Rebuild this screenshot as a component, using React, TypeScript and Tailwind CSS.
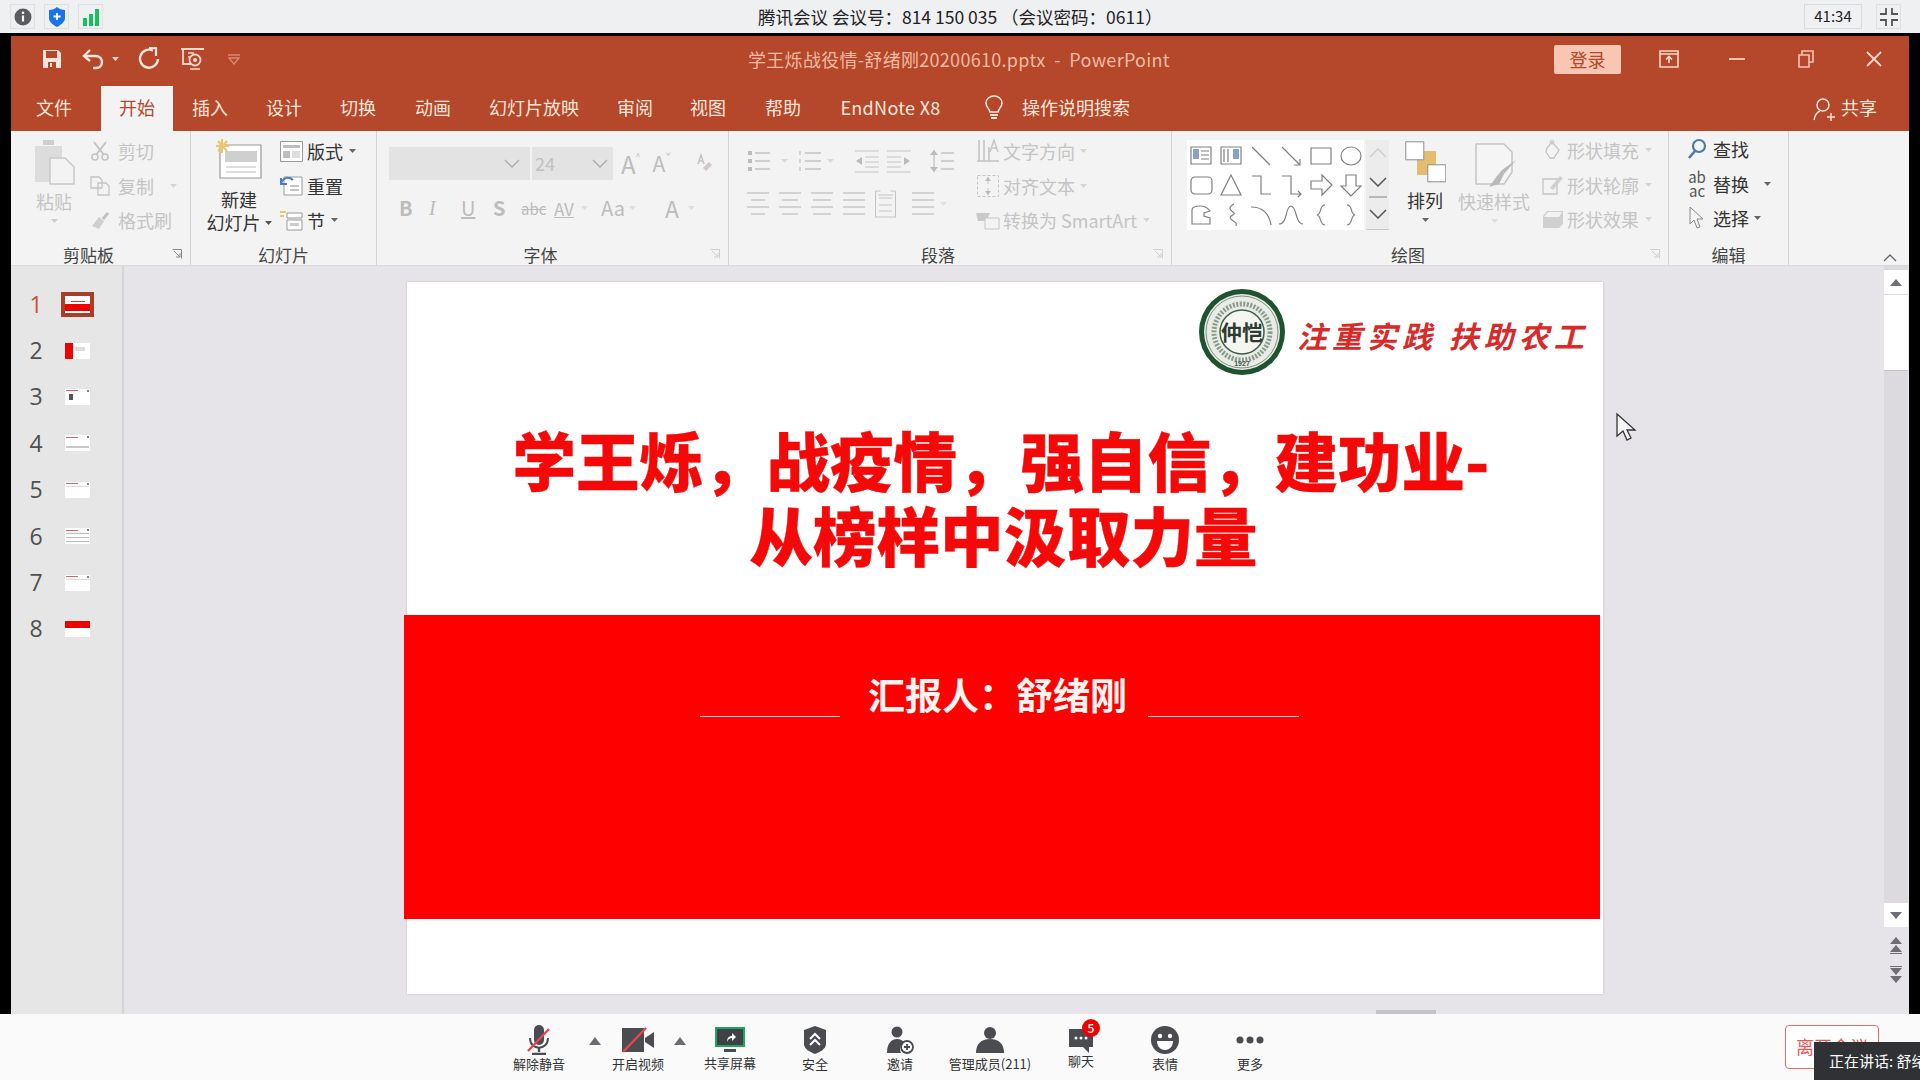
import React from "react";

const G = "#c4c4c4";

function Svg({ w, h, children, className = "" }: { w: number; h: number; children: React.ReactNode; className?: string }) {
  return (
    <svg width={w} height={h} viewBox={`0 0 ${w} ${h}`} fill="none" className={`shrink-0 ${className}`}>
      {children}
    </svg>
  );
}

function Caret({ color = "#777" }: { color?: string }) {
  return (
    <svg width="7" height="4" viewBox="0 0 7 4" className="shrink-0">
      <path d="M0 0h7L3.5 4z" fill={color} />
    </svg>
  );
}

function Lines({ w = 22, n = 4, color = G, insets = [] as number[] }: { w?: number; n?: number; color?: string; insets?: number[] }) {
  return (
    <Svg w={w} h={n * 7}>
      {Array.from({ length: n }).map((_, i) => {
        const ins = insets[i] || 0;
        return <path key={i} d={`M${ins} ${3 + i * 7}H${w - ins}`} stroke={color} strokeWidth="1.4" />;
      })}
    </Svg>
  );
}

function Tab({ label, active, cls }: { label: string; active?: boolean; cls: string }) {
  return (
    <div
      className={`flex h-[45px] items-center justify-center pb-[2px] text-[18px] ${cls} ${
        active ? "bg-[#f3f3f3] text-[#b5472a]" : "text-[#fbe6da]"
      }`}
    >
      {label}
    </div>
  );
}

function TitleBar() {
  return (
    <div className="relative flex h-[50px] items-center pb-[4px]">
      <div className="ml-[31px] flex items-center">
        <Svg w={20} h={20}>
          <path d="M1 1h15l3 3v15H1z" fill="#f7e4dc" />
          <path d="M4 2h11v7H4z" fill="#b5472a" />
          <path d="M6 13h8v6H6z" fill="#b5472a" />
          <path d="M8 14h2v4H8z" fill="#f7e4dc" />
        </Svg>
        <Svg w={24} h={22} className="ml-[20px]">
          <path d="M8 2 2 8l6 5" stroke="#f7e4dc" strokeWidth="2.4" />
          <path d="M3 8h10c5 0 7 3 7 6s-2 6-6 6h-3" stroke="#f7e4dc" strokeWidth="2.4" />
        </Svg>
        <div className="ml-[6px]">
          <Caret color="#f4d8cc" />
        </div>
        <Svg w={22} h={24} className="ml-[19px]">
          <path d="M15 3.6A9 9 0 1 0 20 12" stroke="#f7e4dc" strokeWidth="2.4" />
          <path d="M11 1h7v8" stroke="#f7e4dc" strokeWidth="2.2" />
        </Svg>
        <Svg w={24} h={24} className="ml-[20px]">
          <path d="M1 2h23M3 2v15h8" stroke="#f3d7ca" strokeWidth="1.8" />
          <circle cx="15" cy="13" r="5.5" stroke="#f3d7ca" strokeWidth="1.8" />
          <circle cx="15" cy="13" r="2" fill="#f3d7ca" />
          <path d="M8 6h6M8 10h3M10 22h10" stroke="#f3d7ca" strokeWidth="1.6" />
        </Svg>
        <Svg w={14} h={12} className="ml-[23px]">
          <path d="M1 2h12M2 5h10l-5 6z" stroke="#d98a6d" strokeWidth="1.4" />
        </Svg>
      </div>
      <div className="ml-[507px] whitespace-pre text-[18px] leading-none tracking-[0.3px] text-[#f2b9a2]">学王烁战役情-舒绪刚20200610.pptx  -  PowerPoint</div>
      <div className="ml-[384px] flex h-[29px] w-[67px] items-center justify-center rounded-[2px] bg-[#f8c6b2] text-[18px] text-[#b5472a]">登录</div>
      <Svg w={22} h={20} className="ml-[37px]">
        <path d="M2 2h18v16H2zM2 5h18" stroke="#f7d9cc" strokeWidth="1.6" />
        <path d="M11 14V8M8 10.500l3-3 3 3" stroke="#f7d9cc" strokeWidth="1.6" />
      </Svg>
      <div className="ml-[49px] h-[2px] w-[16px] bg-[#f3c5b2]" />
      <Svg w={16} h={18} className="ml-[53px]">
        <path d="M1 5h10v12H1zM4 5V1h11v11h-4" stroke="#f3c5b2" strokeWidth="1.6" />
      </Svg>
      <Svg w={16} h={16} className="ml-[52px]">
        <path d="M1 1l14 14M15 1 1 15" stroke="#f7d9cc" strokeWidth="1.8" />
      </Svg>
    </div>
  );
}

function TabsRow() {
  return (
    <div className="flex h-[45px] items-center pl-[7px]">
      <Tab label="文件" cls="w-[72px]" />
      <Tab label="开始" active cls="ml-[11px] w-[72px]" />
      <Tab label="插入" cls="ml-[1px] w-[72px]" />
      <Tab label="设计" cls="ml-[2px] w-[72px]" />
      <Tab label="切换" cls="ml-[2px] w-[72px]" />
      <Tab label="动画" cls="ml-[3px] w-[72px]" />
      <Tab label="幻灯片放映" cls="ml-[2px] w-[126px]" />
      <Tab label="审阅" cls="ml-[2px] w-[72px]" />
      <Tab label="视图" cls="ml-[1px] w-[72px]" />
      <Tab label="帮助" cls="ml-[3px] w-[72px]" />
      <Tab label="EndNote X8" cls="ml-[3px] w-[137px] tracking-[0.3px]" />
      <Svg w={20} h={26} className="ml-[25px] mb-[2px]">
        <path d="M6 17C5 13 2 12 2 8a8 7 0 0 1 16 0c0 4-3 5-4 9z" stroke="#fbe6da" strokeWidth="1.5" />
        <path d="M6 20h8M7 23h6" stroke="#fbe6da" strokeWidth="1.8" />
      </Svg>
      <div className="ml-[18px] pb-[2px] text-[18px] text-[#fbe6da]">操作说明搜索</div>
      <Svg w={22} h={24} className="ml-[683px] mt-[1px]">
        <circle cx="10" cy="8" r="6" stroke="#fbe6da" strokeWidth="1.5" />
        <path d="M1 23c1-5 3-8 6-9M14 20h8M18 16v8" stroke="#fbe6da" strokeWidth="1.5" />
      </Svg>
      <div className="ml-[6px] pb-[2px] text-[18px] text-[#fbe6da]">共享</div>
    </div>
  );
}

function Group({ w, label, children, launcher, lightLauncher }: { w: string; label: string; children: React.ReactNode; launcher?: boolean; lightLauncher?: boolean }) {
  return (
    <div className={`flex h-[134px] flex-col border-r border-[#d4d4d4] ${w}`}>
      <div className="flex h-[112px] items-start">{children}</div>
      <div className="flex h-[22px] items-center text-[17px] leading-none text-[#444]">
        <div className="flex-1 text-center">{label}</div>
        {launcher && (
          <Svg w={10} h={10} className="ml-[6px] mr-[8px]">
            <path d="M.5.500h9v9M2 2l6 6M8 4v4H4" stroke={lightLauncher ? "#cfcfcf" : "#8a8a8a"} strokeWidth="1" />
          </Svg>
        )}
      </div>
    </div>
  );
}

function Small({ icon, label, color = G, caret, gap = "ml-[7px]" }: { icon: React.ReactNode; label: string; color?: string; caret?: string; gap?: string }) {
  return (
    <div className="flex h-[34.500px] items-center">
      <div className="flex w-[22px] shrink-0 justify-center">{icon}</div>
      <div className={`${gap} whitespace-nowrap text-[18px] leading-none`} style={{ color }}>
        {label}
      </div>
      {caret && (
        <div className={caret}>
          <Caret color={color === G ? "#d4d4d4" : "#666"} />
        </div>
      )}
    </div>
  );
}

function Clipboard() {
  return (
    <Group w="w-[180px]" label="剪贴板" launcher>
      <div className="ml-[21px] mt-[8px] flex w-[44px] flex-col items-center">
        <Svg w={42} h={46}>
          <path d="M2 7h27v36H2z" fill="#dcdcdc" />
          <path d="M10 6h11V1H10z" fill="#cfcfcf" />
          <path d="M17 19h15l9 9v17H17z" fill="#f3f3f3" stroke="#c9c9c9" strokeWidth="1.5" />
        </Svg>
        <div className="mt-[7px] text-[18px] leading-none text-[#c4c4c4]">粘贴</div>
        <div className="mt-[9px]">
          <Caret color="#ccc" />
        </div>
      </div>
      <div className="ml-[13px] mt-[3px] flex flex-col">
        <Small
          label="剪切"
          icon={
            <Svg w={19} h={20}>
              <path d="M3 1l10 13M15 1 5 14" stroke={G} strokeWidth="2" />
              <circle cx="4" cy="16" r="3" stroke={G} strokeWidth="1.6" />
              <circle cx="14" cy="16" r="3" stroke={G} strokeWidth="1.6" />
            </Svg>
          }
        />
        <Small
          label="复制"
          caret="ml-[16px]"
          icon={
            <Svg w={20} h={20}>
              <path d="M1 1h8l3 3v8H1zM8 7h8l3 3v9H8z" fill="#f3f3f3" stroke={G} strokeWidth="1.3" />
            </Svg>
          }
        />
        <Small
          label="格式刷"
          icon={
            <Svg w={20} h={20}>
              <path d="M2 16 9 7l5 4-5 8z" fill="#cfcfcf" />
              <path d="m12 8 5-6 2 2-5 6z" fill="#bdbdbd" />
            </Svg>
          }
        />
      </div>
    </Group>
  );
}

function Slides() {
  return (
    <Group w="w-[186px]" label="幻灯片">
      <div className="ml-[15px] mt-[8px] flex w-[66px] flex-col items-center">
        <Svg w={46} h={40}>
          <path d="M4 6h41v33H4z" fill="#fff" stroke="#9a9a9a" strokeWidth="1.2" />
          <path d="M9 12h32v11H9z" fill="#cfcfcf" />
          <path d="M10 28h30M10 33h30" stroke="#bbb" />
          <path d="M6 0v14M0 7h13M2 2l9 10M11 2 2 12" stroke="#ecc46b" strokeWidth="2" />
        </Svg>
        <div className="mt-[9px] whitespace-nowrap text-[18px] leading-[23px] text-[#333]">新建</div>
        <div className="flex items-center whitespace-nowrap text-[18px] leading-[23px] text-[#333]">
          幻灯片<span className="ml-[4px]"><Caret color="#555" /></span>
        </div>
      </div>
      <div className="ml-[8px] mt-[3px] flex flex-col">
        <Small
          label="版式"
          color="#333"
          gap="ml-[5px]"
          caret="ml-[6px]"
          icon={
            <Svg w={23} h={21}>
              <path d="M.5.500h22v20H.5z" fill="#fff" stroke="#9a9a9a" />
              <path d="M3 4h17v3H3zM3 10h7v7H3z" fill="#bdbdbd" />
              <path d="M12 10h8v7h-8z" fill="#ddd" />
            </Svg>
          }
        />
        <Small
          label="重置"
          color="#333"
          gap="ml-[5px]"
          icon={
            <Svg w={23} h={21}>
              <path d="M4 2h18v18H4z" fill="#fff" stroke="#9a9a9a" />
              <path d="M10 11h9M10 15h9" stroke="#888" />
              <path d="M1 8c2-5 7-7 12-3" stroke="#4b7bc0" strokeWidth="2" />
              <path d="M1 3v6h6" stroke="#4b7bc0" strokeWidth="2" />
            </Svg>
          }
        />
        <Small
          label="节"
          color="#333"
          gap="ml-[5px]"
          caret="ml-[6px]"
          icon={
            <Svg w={23} h={21}>
              <path d="M0 2h6M0 6h4" stroke="#ecc46b" strokeWidth="2" />
              <path d="M7 3h15v5H7z" fill="#fff" stroke="#999" />
              <path d="M7 10h15v10H7z" fill="#fff" stroke="#999" />
              <path d="M10 13h9v3h-9z" fill="#ccc" />
            </Svg>
          }
        />
      </div>
    </Group>
  );
}

function Font() {
  const t = "text-[#bcbcbc] leading-none";
  return (
    <Group w="w-[352px]" label="字体" launcher lightLauncher>
      <div className="ml-[12px] mt-[16px] flex flex-col">
        <div className="flex items-center">
          <div className="flex h-[33px] w-[141px] items-center justify-end bg-[#e3e3e3] pr-[10px]">
            <Svg w={16} h={9}>
              <path d="m1 1 7 7 7-7" stroke="#b0b0b0" strokeWidth="1.5" />
            </Svg>
          </div>
          <div className="ml-[2px] flex h-[33px] w-[81px] items-center justify-between bg-[#e3e3e3] pl-[3px] pr-[5px] text-[18px] text-[#c0c0c0]">
            24
            <Svg w={16} h={9}>
              <path d="m1 1 7 7 7-7" stroke="#b0b0b0" strokeWidth="1.5" />
            </Svg>
          </div>
          <span className={`ml-[8px] text-[24px] ${t}`}>A</span>
          <span className="mb-[14px] text-[9px] leading-none text-[#bcbcbc]">^</span>
          <span className={`ml-[12px] text-[21px] ${t}`}>A</span>
          <span className="mb-[14px] text-[9px] leading-none text-[#bcbcbc]">ˇ</span>
          <Svg w={20} h={24} className="ml-[22px]">
            <path d="M5 12 8 3l3 9M6 9h4" stroke={G} strokeWidth="1.5" />
            <path d="m10 16 6-6 3 3-6 6z" fill="#d2c8c8" />
          </Svg>
        </div>
        <div className="ml-[10px] mt-[13px] flex h-[30px] items-center">
          <span className={`w-[30px] text-[20px] font-bold ${t}`}>B</span>
          <span className={`w-[32px] text-[20px] italic ${t}`} style={{ fontFamily: "Liberation Serif" }}>I</span>
          <span className={`w-[32px] text-[20px] underline ${t}`}>U</span>
          <span className={`w-[28px] text-[20px] font-bold ${t}`}>S</span>
          <span className={`w-[33px] text-[15px] line-through ${t}`}>abc</span>
          <span className={`w-[27px] text-[17px] underline ${t}`}>AV</span>
          <Caret color="#ddd" />
          <span className={`ml-[13px] w-[28px] text-[20px] ${t}`}>Aa</span>
          <Caret color="#ddd" />
          <span className={`ml-[29px] text-[23px] ${t}`}>A</span>
          <span className="ml-[9px]">
            <Caret color="#ddd" />
          </span>
        </div>
      </div>
    </Group>
  );
}

function Para() {
  return (
    <Group w="w-[443px]" label="段落" launcher lightLauncher>
      <div className="ml-[18px] mt-[15px] flex w-[210px] flex-col">
        <div className="flex h-[30px] items-center">
          <Svg w={23} h={24}>
            <path d="M8 4h15M8 12h15M8 20h15" stroke={G} strokeWidth="1.3" />
            <path d="M1 2h4v4H1zM1 10h4v4H1zM1 18h4v4H1z" fill="#bbb" />
          </Svg>
          <span className="ml-[11px]"><Caret color="#d8d8d8" /></span>
          <Svg w={24} h={24} className="ml-[9px]">
            <path d="M8 4h16M8 12h16M8 20h16M3 2v4M3 10v4M3 18v4" stroke={G} strokeWidth="1.3" />
          </Svg>
          <span className="ml-[6px]"><Caret color="#d8d8d8" /></span>
          <Svg w={24} h={24} className="ml-[21px]">
            <path d="M0 2h24M10 8h14M10 13h14M10 18h14M0 23h24" stroke={G} />
            <path d="M1 12 7 8v8z" fill="#bbb" />
          </Svg>
          <Svg w={24} h={24} className="ml-[8px]">
            <path d="M0 2h24M0 8h14M0 13h14M0 18h14M0 23h24" stroke={G} />
            <path d="m23 12-6-4v8z" fill="#bbb" />
          </Svg>
          <Svg w={26} h={26} className="ml-[18px]">
            <path d="M12 5h13M12 13h13M12 21h13M5 2v22" stroke={G} strokeWidth="1.3" />
            <path d="M1 7l4-5 4 5zM1 19l4 5 4-5z" fill="#bbb" />
          </Svg>
        </div>
        <div className="mt-[13px] flex h-[30px] items-center">
          <Lines insets={[0, 4, 0, 4]} />
          <span className="ml-[10px]"><Lines insets={[0, 3, 0, 3]} /></span>
          <span className="ml-[10px]"><Lines insets={[0, 2, 0, 2]} /></span>
          <span className="ml-[10px]"><Lines /></span>
          <Svg w={21} h={28} className="ml-[10px]">
            <path d="M.5 1v26h20V1M.5 1h5M20.500 1h-5M4 8h13M4 15h13M4 21h13M3 5h15" stroke={G} strokeWidth="1.1" />
          </Svg>
          <span className="ml-[16px]"><Lines /></span>
          <span className="ml-[6px]"><Caret color="#e0e0e0" /></span>
        </div>
      </div>
      <div className="ml-[20px] mt-[3px] flex flex-col">
        <Small
          label="文字方向"
          caret="ml-[5px]"
          gap="ml-[4px]"
          icon={
            <Svg w={22} h={24}>
              <path d="M2 1v21M7 1v21M12 8v14" stroke={G} strokeWidth="1.6" />
              <path d="m13 13 4-12 4 12M14.500 9h5" stroke={G} strokeWidth="1.4" />
              <path d="M0 22h22" stroke={G} strokeWidth="1.6" />
            </Svg>
          }
        />
        <Small
          label="对齐文本"
          caret="ml-[5px]"
          gap="ml-[4px]"
          icon={
            <Svg w={22} h={22}>
              <path d="M.5.500h21v21H.5z" stroke={G} strokeDasharray="3 2" />
              <path d="M11 2v7M11 13v7" stroke={G} />
              <path d="M8 6l3-4 3 4zM8 16l3 4 3-4z" fill="#bbb" />
            </Svg>
          }
        />
        <Small
          label="转换为 SmartArt"
          caret="ml-[6px]"
          gap="ml-[4px]"
          icon={
            <Svg w={24} h={20}>
              <path d="M0 3h14l-4 8H2z" fill="#c9c9c9" />
              <path d="M9 8h14v11H9z" fill="#f3f3f3" stroke={G} />
            </Svg>
          }
        />
      </div>
    </Group>
  );
}

function Shape({ children }: { children: React.ReactNode }) {
  return (
    <Svg w={30} h={30}>
      <g stroke="#808080" strokeWidth="1.2">{children}</g>
    </Svg>
  );
}

function GalleryShapes() {
  return (
    <div className="grid grid-cols-[repeat(6,30px)] grid-rows-[repeat(3,29.500px)]">
      <Shape><path d="M5 6h20v17H5z" /><path d="M15 10h8M15 14h8M15 18h8" /><path d="M7 8h6v10H7z" fill="#8aa1c4" stroke="none" /></Shape>
      <Shape><path d="M5 6h20v17H5z" /><path d="M8 8v13M12 8v13" /><path d="M17 8h6v10h-6z" fill="#8aa1c4" stroke="none" /></Shape>
      <Shape><path d="m6 6 18 18" /></Shape>
      <Shape><path d="m6 6 18 18M24 18v6h-6" /></Shape>
      <Shape><path d="M5 7h20v16H5z" /></Shape>
      <Shape><ellipse cx="15" cy="15" rx="10" ry="9" /></Shape>
      <Shape><rect x="5" y="7" width="21" height="17" rx="4" /></Shape>
      <Shape><path d="M15 5 5 25h20z" /></Shape>
      <Shape><path d="M6 6h9v18h10" /></Shape>
      <Shape><path d="M6 6h9v18h10M22 21l3 3-3 3" /></Shape>
      <Shape><path d="M5 11h11V5l10 10-10 10v-6H5z" /></Shape>
      <Shape><path d="M10 5h10v11h5L15 26 5 16h5z" /></Shape>
      <Shape><path d="M6 24V10c0-3 3-4 8-4 5 0 8 2 10 5l-6 2v3l6 2v6z" /></Shape>
      <Shape><path d="M18 4c-8 4-2 7 0 9s-8 3-2 7 4 4 4 6" /></Shape>
      <Shape><path d="M5 7c12 0 18 6 20 18" /></Shape>
      <Shape><path d="M3 24C12 24 9 6 15 6s4 18 12 18" /></Shape>
      <Shape><path d="M19 5c-6 0-3 9-8 10 5 1 2 10 8 10" /></Shape>
      <Shape><path d="M11 5c6 0 3 9 8 10-5 1-2 10-8 10" /></Shape>
    </div>
  );
}

function Drawing() {
  return (
    <Group w="w-[497px]" label="绘图" launcher lightLauncher>
      <div className="ml-[15px] mt-[9px] flex">
        <div className="flex h-[90px] w-[177px] items-center justify-center bg-white">
          <GalleryShapes />
        </div>
        <div className="ml-[2px] flex h-[90px] w-[23px] flex-col items-center border-b border-[#c8c8c8] bg-[#ececec]">
          <div className="flex h-[27px] items-center">
            <Svg w={18} h={10}><path d="m1 9 8-8 8 8" stroke="#cfcfcf" strokeWidth="1.5" /></Svg>
          </div>
          <div className="flex h-[30px] items-center">
            <Svg w={18} h={10}><path d="m1 1 8 8 8-8" stroke="#555" strokeWidth="1.5" /></Svg>
          </div>
          <div className="flex h-[33px] flex-col items-center justify-center gap-[4px] border-t-2 border-[#b8b8b8] pt-[1px]">
            <Svg w={18} h={10}><path d="m1 1 8 8 8-8" stroke="#555" strokeWidth="1.5" /></Svg>
          </div>
        </div>
      </div>
      <div className="ml-[14px] mt-[10px] flex w-[44px] flex-col items-center">
        <Svg w={41} h={42}>
          <path d="M12 10h19v24H12z" fill="#e5bd6f" />
          <path d="M.8.800h18v18H.8z" fill="#fff" stroke="#8c8c8c" />
          <path d="M22.800 23.800h18v17H22.800z" fill="#fff" stroke="#8c8c8c" />
        </Svg>
        <div className="mt-[8px] text-[18px] leading-none text-[#333]">排列</div>
        <div className="mt-[9px]"><Caret color="#666" /></div>
      </div>
      <div className="ml-[11px] mt-[12px] flex w-[72px] flex-col items-center">
        <Svg w={48} h={44}>
          <path d="M6 1h28l8 8v20l-8 12H6z" fill="#f5f5f5" stroke={G} strokeWidth="1.5" strokeLinejoin="round" />
          <path d="m46 17-12 14-5 10-10 3 8-11 5-6z" fill="#b9b9b9" />
        </Svg>
        <div className="mt-[5px] whitespace-nowrap text-[18px] leading-none text-[#c4c4c4]">快速样式</div>
        <div className="mt-[9px]"><Caret color="#ddd" /></div>
      </div>
      <div className="ml-[12px] mt-[2px] flex flex-col">
        <Small
          label="形状填充"
          caret="ml-[6px]"
          gap="ml-[3px]"
          icon={
            <Svg w={20} h={22}>
              <path d="M4 9 9 3l7 8-5 8H7l-4-6z" fill="#f3f3f3" stroke={G} strokeWidth="1.3" />
              <circle cx="9" cy="3" r="2" stroke={G} />
            </Svg>
          }
        />
        <Small
          label="形状轮廓"
          caret="ml-[6px]"
          gap="ml-[3px]"
          icon={
            <Svg w={22} h={20}>
              <path d="M1 4h14v15H1z" stroke={G} strokeWidth="1.3" />
              <path d="m8 13 10-12 3 2-10 12z" fill="#cfcfcf" />
            </Svg>
          }
        />
        <Small
          label="形状效果"
          caret="ml-[6px]"
          gap="ml-[3px]"
          icon={
            <Svg w={22} h={20}>
              <path d="M5 2h16v13l-4 4H1V7z" fill="#d0d0d0" />
              <path d="M6 3h14l-3 5H2z" fill="#f2f2f2" />
            </Svg>
          }
        />
      </div>
    </Group>
  );
}

function Editing() {
  return (
    <Group w="w-[120px]" label="编辑">
      <div className="ml-[17px] mt-[1px] flex flex-col">
        <Small
          label="查找"
          color="#333"
          gap="ml-[5px]"
          icon={
            <Svg w={20} h={22}>
              <circle cx="12" cy="8" r="6" stroke="#4e7aa8" strokeWidth="2.2" />
              <path d="M8 13 2 20" stroke="#4e7aa8" strokeWidth="2.6" />
            </Svg>
          }
        />
        <Small
          label="替换"
          color="#333"
          gap="ml-[5px]"
          caret="ml-[15px]"
          icon={<div className="text-center text-[15px] leading-[14px] text-[#555]">ab<br />ac</div>}
        />
        <Small
          label="选择"
          color="#333"
          gap="ml-[5px]"
          caret="ml-[5px]"
          icon={
            <Svg w={16} h={24}>
              <path d="M1 1v17l4-4 3 8 3-1-3-8h6z" fill="#f6f6f6" stroke="#888" />
            </Svg>
          }
        />
      </div>
    </Group>
  );
}

function Ribbon() {
  return (
    <div className="flex h-[135px] items-start border-b border-[#dadada] bg-[#f3f3f3]">
      <Clipboard />
      <Slides />
      <Font />
      <Para />
      <Drawing />
      <Editing />
      <Svg w={14} h={8} className="ml-[94px] mt-[123px]">
        <path d="m1 7 6-6 6 6" stroke="#666" strokeWidth="1.3" />
      </Svg>
    </div>
  );
}

function Thumb({ n, active, children }: { n: number; active?: boolean; children: React.ReactNode }) {
  return (
    <div className="flex h-[46.400px] items-center">
      <div
        className={`w-[24px] text-center text-[23px] leading-none ${active ? "text-[#c8503c]" : "text-[#505050]"}`}
        style={{ fontFamily: "Open Sans" }}
      >
        {n}
      </div>
      {active ? (
        <div className="ml-[13px] h-[25px] w-[33px] border-[4px] border-[#a63f2a] bg-white">{children}</div>
      ) : (
        <div className="ml-[17px] h-[16px] w-[25px] overflow-hidden bg-white">{children}</div>
      )}
    </div>
  );
}

function MiniHead() {
  return (
    <div className="flex items-center justify-between px-[1px] pt-[1px]">
      <div className="h-[1px] w-[12px] bg-[#d8646a]" />
      <div className="h-[2px] w-[2px] bg-[#888]" />
    </div>
  );
}

function Thumbs() {
  return (
    <div className="w-[113px] shrink-0 border-r-2 border-[#d6d6d6] bg-[#e6e6e6] pl-[13px] pt-[15px]">
      <Thumb n={1} active>
        <div className="flex h-full flex-col justify-end">
          <div className="mx-auto mb-[2px] h-[1px] w-[14px] bg-[#e03030]" />
          <div className="h-[7px] bg-[#f00000]" />
          <div className="h-[2px]" />
        </div>
      </Thumb>
      <Thumb n={2}>
        <div className="flex h-full">
          <div className="w-[8px] bg-[#f00000]" />
          <div className="ml-[2px] mt-[4px] h-[4px] w-[10px] bg-[#ddd]" />
        </div>
      </Thumb>
      <Thumb n={3}>
        <MiniHead />
        <div className="ml-[4px] mt-[2px] h-[6px] w-[4px] bg-[#555]" />
      </Thumb>
      <Thumb n={4}>
        <MiniHead />
        <div className="mx-[1px] mt-[8px] h-[2px] bg-[#c8c8c8]" />
      </Thumb>
      <Thumb n={5}>
        <MiniHead />
        <div className="mx-[1px] mt-[1px] h-[1px] bg-[#ddd]" />
      </Thumb>
      <Thumb n={6}>
        <MiniHead />
        <div className="mx-[1px] mt-[2px] h-[1px] bg-[#bbb]" />
        <div className="mx-[1px] mt-[3px] h-[1px] bg-[#bbb]" />
        <div className="mx-[1px] mt-[3px] h-[1px] bg-[#bbb]" />
      </Thumb>
      <Thumb n={7}>
        <MiniHead />
        <div className="mx-[1px] mt-[1px] h-[1px] bg-[#ddd]" />
      </Thumb>
      <Thumb n={8}>
        <div className="h-[7px] bg-[#f00000]" />
      </Thumb>
    </div>
  );
}

function Logo() {
  return (
    <svg width="88" height="88" viewBox="0 0 88 88" className="shrink-0">
      <circle cx="44" cy="44" r="43" fill="#1f5231" />
      <circle cx="44" cy="44" r="38" fill="#e9ece4" />
      <circle cx="44" cy="44" r="36" fill="none" stroke="#7c9284" strokeWidth="1" />
      <circle cx="44" cy="44" r="28" fill="none" stroke="#8a9a8e" strokeWidth="5" strokeDasharray="2 1.5" />
      <circle cx="44" cy="44" r="22" fill="#f5f5f1" stroke="#3f5e48" strokeWidth="1.5" />
      <text x="44" y="52" textAnchor="middle" fontSize="21" fontWeight="700" fill="#2d3b30" fontFamily="Noto Sans CJK SC">仲恺</text>
      <text x="44" y="78" textAnchor="middle" fontSize="7" fontWeight="700" fill="#465a4b" fontFamily="Liberation Sans">1927</text>
    </svg>
  );
}

function Slide() {
  return (
    <div className="ml-[283px] mt-[16px] h-[712px] w-[1196px] shrink-0 bg-white shadow-[0_0_2px_#bdbdbd]">
      <div className="flex h-[92px] items-start pl-[791px] pt-[6px]">
        <Logo />
        <div
          className="ml-[11px] mt-[29px] whitespace-pre text-[30px] font-bold italic leading-[36px] tracking-[5px] text-[#d92a2a]"
          style={{ fontFamily: "Noto Sans CJK SC, sans-serif" }}
        >
          注重实践 扶助农工
        </div>
      </div>
      <div className="mb-[44px] mt-[47px] text-center text-[63.500px] font-black leading-[75px] text-[#f40808] [-webkit-text-stroke:0.4px_#f40808]">
        <div className="ml-[-8px] whitespace-nowrap">学王烁，战疫情，强自信，建功业-</div>
        <div className="ml-[-3px] whitespace-nowrap">从榜样中汲取力量</div>
      </div>
      <div className="ml-[-3px] flex h-[304px] w-[1196px] items-start bg-[#ff0000] pl-[296px] pt-[57px]">
        <div className="mt-[44px] h-[1px] w-[140px] bg-[#ffd0d0]" />
        <div className="ml-[28px] whitespace-nowrap text-[37px] font-bold leading-[44px] text-[#fff4f0]">汇报人：舒绪刚</div>
        <div className="ml-[21px] mt-[44px] h-[1px] w-[151px] bg-[#ffd0d0]" />
      </div>
    </div>
  );
}

function Arrow({ up }: { up?: boolean }) {
  return (
    <svg width="12" height="7" viewBox="0 0 12 7">
      <path d={up ? "M6 0l6 7H0z" : "M0 0h12L6 7z"} fill="#6e6e76" />
    </svg>
  );
}

function Scrollbar() {
  return (
    <div className="ml-auto mr-[1px] flex w-[24px] shrink-0 flex-col items-center bg-[#dcdadf]">
      <div className="mt-[4px] flex h-[24px] w-full items-center justify-center bg-white">
        <Arrow up />
      </div>
      <div className="mt-[1px] h-[76px] w-full border-b border-[#c4c4c4] bg-white" />
      <div className="flex-1" />
      <div className="flex h-[24px] w-full items-center justify-center bg-white">
        <Arrow />
      </div>
      <div className="flex h-[87px] w-full flex-col items-center bg-[#e6e4e8] pt-[10px]">
        <div className="flex flex-col items-center gap-[1px]">
          <Arrow up />
          <Arrow up />
          <div className="h-[1px] w-[12px] bg-[#6e6e76]" />
        </div>
        <div className="mt-[12px] flex flex-col items-center gap-[1px]">
          <div className="h-[1px] w-[12px] bg-[#6e6e76]" />
          <Arrow />
          <Arrow />
        </div>
      </div>
    </div>
  );
}

function Main() {
  return (
    <div className="relative flex h-[748px] bg-[#e6e4e8]">
      <Thumbs />
      <Slide />
      <Scrollbar />
      <div className="absolute bottom-0 left-[1365px] h-[4px] w-[60px] bg-[#c4c4c6]" />
      <svg width="22" height="30" viewBox="0 0 22 30" className="absolute left-[1604px] top-[146px]">
        <path d="M2 2v22l6-5 4 9 4-2-4-8h8z" fill="#f5f5f5" stroke="#333" strokeWidth="1.3" />
      </svg>
    </div>
  );
}

function ToolItem({ label, cls, children, labelCls = "mt-[1px]" }: { label: string; cls: string; children: React.ReactNode; labelCls?: string }) {
  return (
    <div className={`flex shrink-0 flex-col items-center ${cls}`}>
      <div className="flex h-[30px] items-center justify-center">{children}</div>
      <div className={`whitespace-nowrap text-[13px] leading-[16px] text-[#333] ${labelCls}`}>{label}</div>
    </div>
  );
}

function Tri() {
  return (
    <svg width="12" height="8" viewBox="0 0 12 8" className="mb-[14px] shrink-0">
      <path d="M6 0l6 8H0z" fill="#6b6d72" />
    </svg>
  );
}

function Toolbar() {
  const c = "#4a4c51";
  return (
    <div className="relative flex h-[66px] items-center overflow-hidden bg-[#fafafa] pl-[499px] pt-[2px]">
      <ToolItem label="解除静音" cls="w-[80px]">
        <Svg w={28} h={30}>
          <path d="M14 0a5 5 0 0 1 5 5v10a5 5 0 0 1-10 0V5a5 5 0 0 1 5-5z" fill={c} />
          <path d="M5 13c0 13 18 13 18 0" stroke={c} strokeWidth="2" />
          <path d="M14 22v5M7 29h14" stroke={c} strokeWidth="2.4" />
          <path d="M3 26 24 4" stroke="#e8454c" strokeWidth="2.4" />
        </Svg>
      </ToolItem>
      <div className="ml-[10px]"><Tri /></div>
      <ToolItem label="开启视频" cls="ml-[7px] w-[60px]">
        <Svg w={32} h={26}>
          <path d="M0 1h22v24H0z" fill={c} />
          <path d="m23 11 9-6v16l-9-6z" fill={c} />
          <path d="M1 25 24 1" stroke="#e8454c" strokeWidth="2.4" />
        </Svg>
      </ToolItem>
      <div className="ml-[6px]"><Tri /></div>
      <ToolItem label="共享屏幕" cls="ml-[9px] w-[70px]" labelCls="mb-[1px]">
        <Svg w={30} h={26}>
          <rect x="1" y="1" width="28" height="18" fill="#3e4246" stroke="#1fa463" strokeWidth="2" />
          <path d="M9 22h12v3H9z" fill={c} />
          <path d="M12 15c0-4 2-6 5-6V6l4 4-4 4v-3c-2 0-4 1-5 4z" fill="#fff" />
        </Svg>
      </ToolItem>
      <ToolItem label="安全" cls="ml-[15px] w-[70px]">
        <Svg w={24} h={28}>
          <path d="M12 0l11 4v14c0 5-6 8-11 10C7 26 1 23 1 18V4z" fill={c} />
          <path d="M7 13l5-5 5 5M7 19l5-5 5 5" stroke="#fff" strokeWidth="2" />
        </Svg>
      </ToolItem>
      <ToolItem label="邀请" cls="ml-[15px] w-[70px]">
        <Svg w={28} h={28}>
          <circle cx="11" cy="6" r="5.500" fill={c} />
          <path d="M1 27c0-9 4-14 10-14 3 0 5 1 7 3-4 3-5 7-3 11z" fill={c} />
          <circle cx="21" cy="21" r="6" fill="#fafafa" stroke={c} strokeWidth="1.8" />
          <path d="M21 18v6M18 21h6" stroke={c} strokeWidth="1.8" />
        </Svg>
      </ToolItem>
      <ToolItem label="管理成员(211)" cls="ml-[10px] w-[90px]">
        <Svg w={28} h={28}>
          <circle cx="14" cy="7" r="6" fill={c} />
          <path d="M0 27c0-9 5-14 14-14s14 5 14 14z" fill={c} />
        </Svg>
      </ToolItem>
      <ToolItem label="聊天" cls="ml-[11px] w-[70px]" labelCls="mt-[-2px] mb-[3px]">
        <div className="relative">
          <Svg w={26} h={28}>
            <path d="M1 3h24v18h-4v6l-6-6H1z" fill={c} />
            <circle cx="8" cy="12" r="1.500" fill="#fff" />
            <circle cx="13" cy="12" r="1.500" fill="#fff" />
            <circle cx="18" cy="12" r="1.500" fill="#fff" />
          </Svg>
          <div className="absolute left-[14px] top-[-7px] flex h-[18px] w-[18px] items-center justify-center rounded-full bg-[#f00000] text-[12px] font-medium leading-none text-white">5</div>
        </div>
      </ToolItem>
      <ToolItem label="表情" cls="ml-[14px] w-[70px]">
        <Svg w={28} h={28}>
          <circle cx="14" cy="14" r="14" fill={c} />
          <circle cx="9" cy="10" r="2.200" fill="#fff" />
          <circle cx="19" cy="10" r="2.200" fill="#fff" />
          <path d="M6 15h16c0 6-4 9-8 9s-8-3-8-9z" fill="#fff" />
        </Svg>
      </ToolItem>
      <ToolItem label="更多" cls="ml-[15px] w-[70px]">
        <Svg w={28} h={8}>
          <circle cx="4" cy="4" r="3.500" fill={c} />
          <circle cx="14" cy="4" r="3.500" fill={c} />
          <circle cx="24" cy="4" r="3.500" fill={c} />
        </Svg>
      </ToolItem>
      <div className="ml-[500px] mb-[2px] flex h-[44px] w-[94px] shrink-0 items-center justify-center rounded-[4px] border border-[#e86a6a] bg-white pb-[1px] text-[18px] text-[#e8585a]">离开会议</div>
      <div className="absolute bottom-0 left-[1814px] flex h-[38px] w-[106px] items-center overflow-hidden whitespace-nowrap bg-[#2f3135] pl-[15px] text-[15px] text-white">正在讲话: 舒绪刚</div>
    </div>
  );
}

function IconBox({ cls, children }: { cls: string; children: React.ReactNode }) {
  return <div className={`flex h-[25px] w-[25px] items-center justify-center border border-[#e0e0e2] ${cls}`}>{children}</div>;
}

function TopBar() {
  return (
    <div className="flex h-[33px] items-center bg-[#eff0f2] pl-[10px]">
      <IconBox cls="">
        <Svg w={18} h={18}>
          <circle cx="9" cy="9" r="8.500" fill="#5a5c60" />
          <path d="M9 7.500v6" stroke="#fff" strokeWidth="2.200" />
          <circle cx="9" cy="4.800" r="1.300" fill="#fff" />
        </Svg>
      </IconBox>
      <IconBox cls="ml-[9px]">
        <Svg w={16} h={20}>
          <path d="M8 0c2 2 5 3 8 3v8c0 4-4 7-8 9-4-2-8-5-8-9V3c3 0 6-1 8-3z" fill="#1a73e8" />
          <path d="M8 6v7M4.500 9.500h7" stroke="#fff" strokeWidth="1.800" />
        </Svg>
      </IconBox>
      <IconBox cls="ml-[9px]">
        <Svg w={18} h={18}>
          <path d="M1 10h4v8H1zM7 6h4v12H7zM13 1h4v17h-4z" fill="#16c060" />
        </Svg>
      </IconBox>
      <div className="ml-[655px] whitespace-pre text-[17.500px] leading-none text-[#222]">腾讯会议 会议号：814 150 035 （会议密码：0611）</div>
      <div className="ml-auto flex h-[25px] w-[58px] items-center justify-center border border-[#dcdcdf] text-[15px] text-[#222]">41:34</div>
      <div className="ml-[14px] mr-[19px] flex h-[25px] w-[25px] items-center justify-center border border-[#e0e0e2]">
        <Svg w={20} h={20}>
          <path d="M7 1v6H1M13 1v6h6M7 19v-6H1M13 19v-6h6" stroke="#555" strokeWidth="1.800" />
        </Svg>
      </div>
    </div>
  );
}

export default function App() {
  return (
    <div
      className="h-[1080px] w-[1920px] overflow-hidden bg-black"
      style={{ fontFamily: '"Noto Sans CJK SC", "Noto Sans", sans-serif' }}
    >
      <TopBar />
      <div className="mx-[11px] mt-[3px] bg-[#b5472a]">
        <TitleBar />
        <TabsRow />
        <Ribbon />
        <Main />
      </div>
      <Toolbar />
    </div>
  );
}
